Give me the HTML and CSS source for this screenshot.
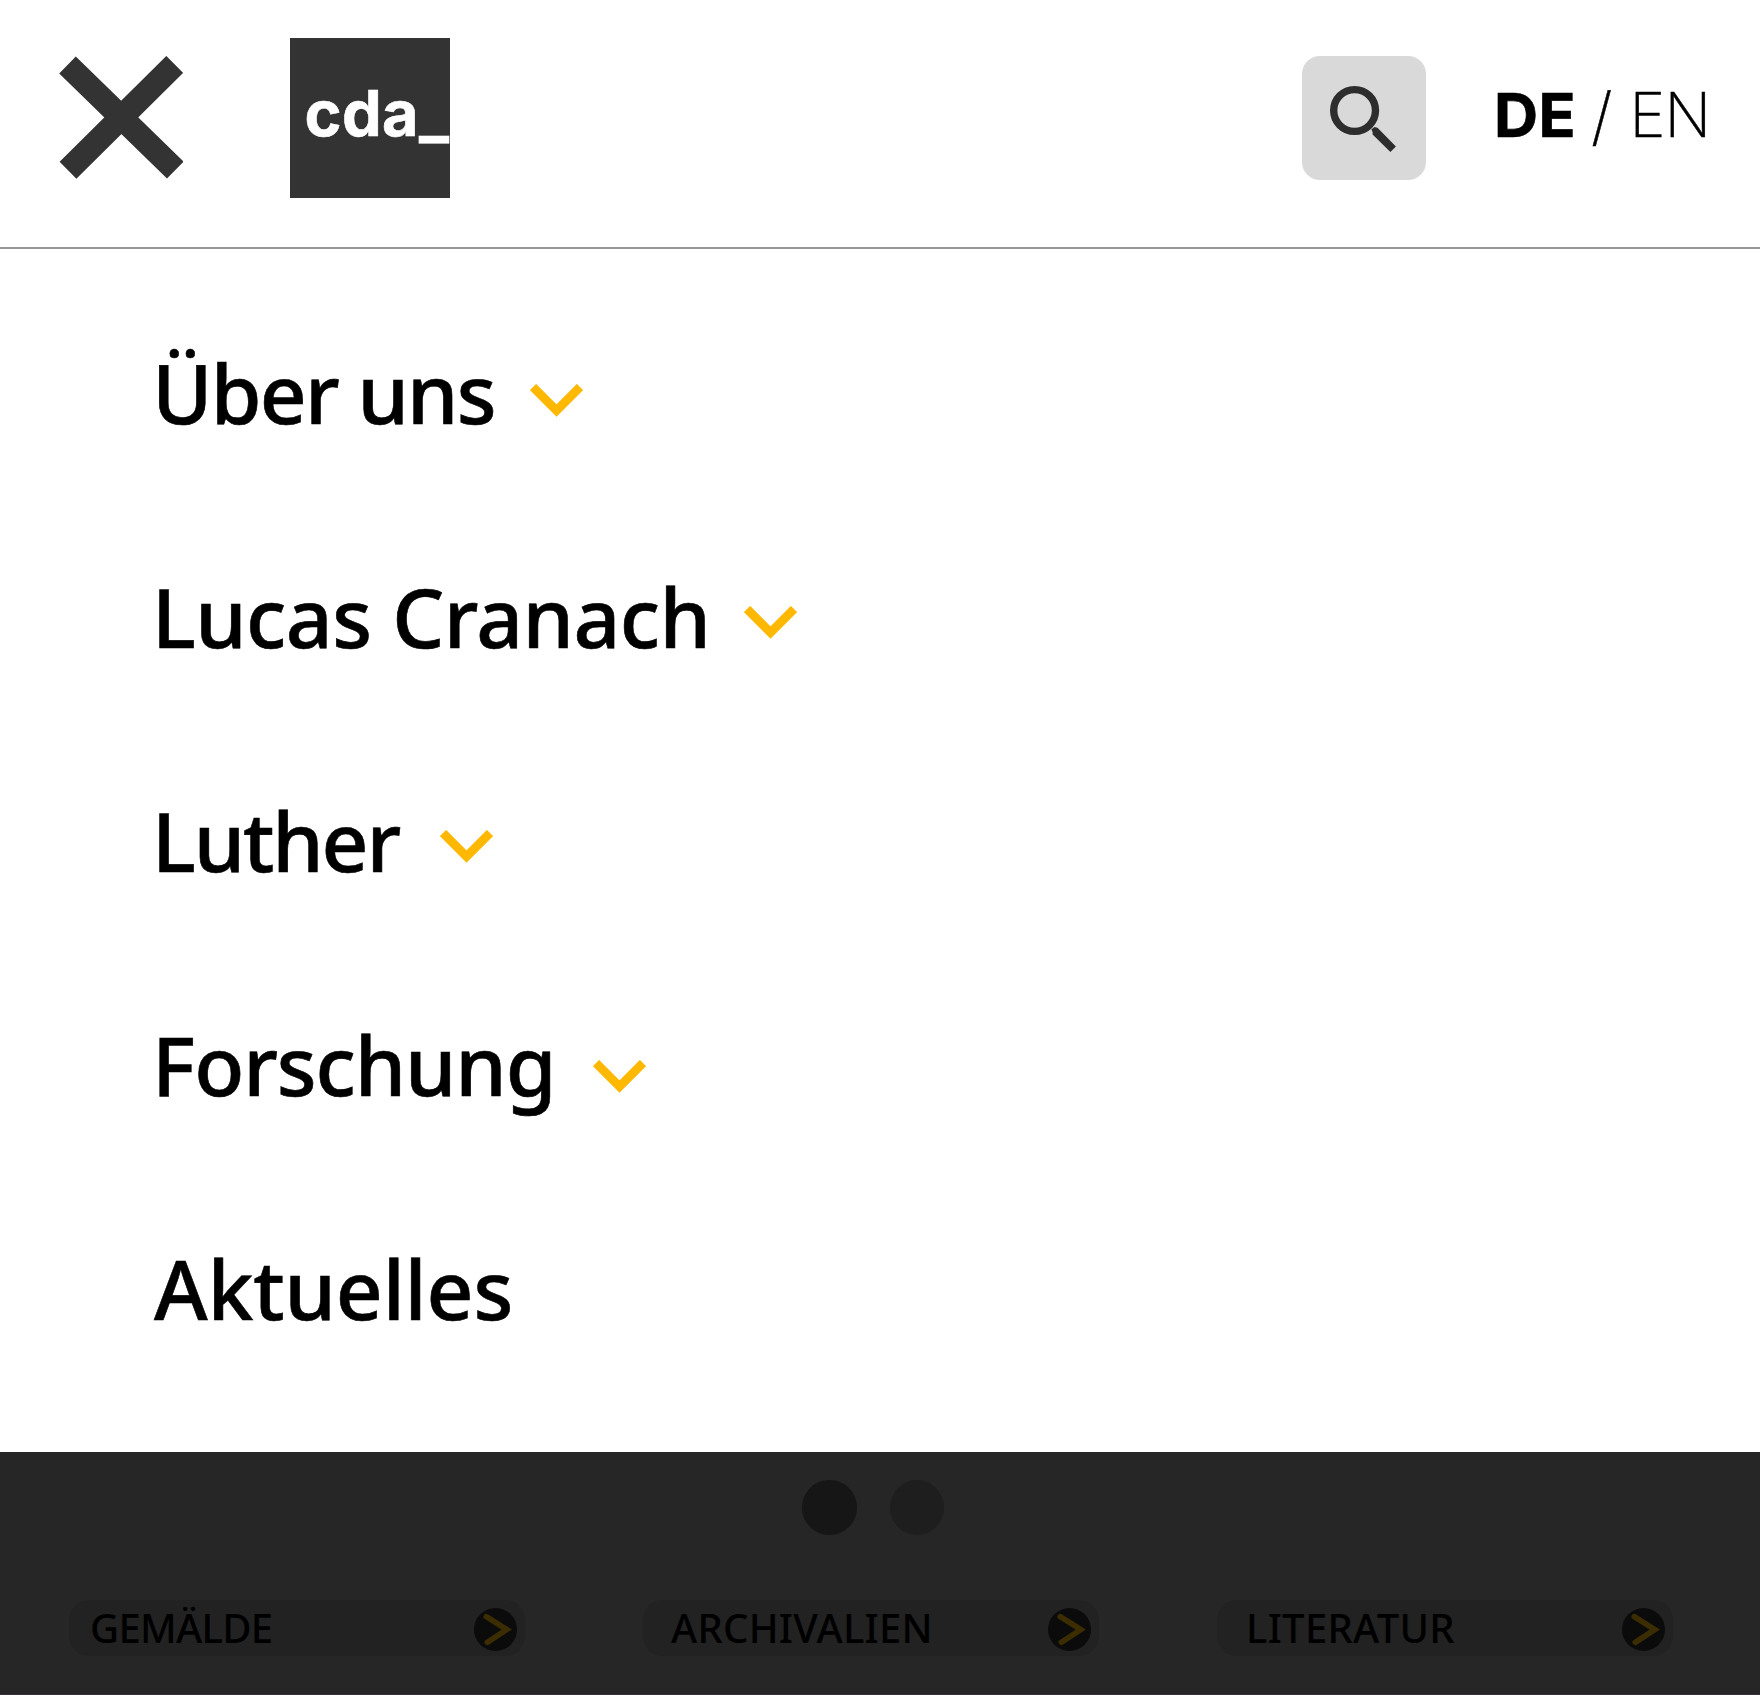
FILE: index.html
```html
<!DOCTYPE html>
<html lang="de">
<head>
<meta charset="utf-8">
<title>cda_</title>
<link rel="stylesheet" href="styles.css">
</head>
<body>
<header class="header">
  <button class="close" aria-label="Menü schließen">
    <svg width="124" height="124" viewBox="0 0 124 124"><path d="M8.5 9.1 116.3 114.1M115.7 8.4 9 114.3" fill="none" stroke="#333" stroke-width="23.8"/></svg>
  </button>
  <a class="logo"><span class="logo-text">cda_</span></a>
  <button class="search" aria-label="Suche">
    <svg width="124" height="124" viewBox="0 0 124 124"><circle cx="52.6" cy="54.5" r="20.9" fill="none" stroke="#2d2d2d" stroke-width="7.4"/><path d="M69.3 73.5 72.5 71l3 .7L93.9 90.4 88.4 96 70.6 78.4V76z" fill="#2d2d2d"/></svg>
  </button>
  <div class="lang"><span class="lang-active">DE</span><span class="lang-sep">/</span><span class="lang-other">EN</span></div>
</header>
<nav class="menu">
  <a class="item item-about"><span>Über uns</span><svg class="chevron" viewBox="0 0 53 33"><path d="M3 3 26.5 26.5 50 3" /></svg></a>
  <a class="item item-cranach"><span>Lucas Cranach</span><svg class="chevron" viewBox="0 0 53 33"><path d="M3 3 26.5 26.5 50 3" /></svg></a>
  <a class="item item-luther"><span>Luther</span><svg class="chevron" viewBox="0 0 53 33"><path d="M3 3 26.5 26.5 50 3" /></svg></a>
  <a class="item item-research"><span>Forschung</span><svg class="chevron" viewBox="0 0 53 33"><path d="M3 3 26.5 26.5 50 3" /></svg></a>
  <a class="item item-news"><span>Aktuelles</span></a>
</nav>
<section class="backdrop">
  <div class="dots"><i class="dot dot-active"></i><i class="dot"></i></div>
  <div class="pills">
    <a class="pill pill-paintings"><span>GEMÄLDE</span><svg class="arrow" viewBox="0 0 42 42"><circle cx="21" cy="21" r="21"/><path d="M12 8.5 32 21 13 33.5"/></svg></a>
    <a class="pill pill-archive"><span>ARCHIVALIEN</span><svg class="arrow" viewBox="0 0 42 42"><circle cx="21" cy="21" r="21"/><path d="M12 8.5 32 21 13 33.5"/></svg></a>
    <a class="pill pill-literature"><span>LITERATUR</span><svg class="arrow" viewBox="0 0 42 42"><circle cx="21" cy="21" r="21"/><path d="M12 8.5 32 21 13 33.5"/></svg></a>
  </div>
</section>
</body>
</html>
```
FILE: styles.css
```css
* { box-sizing: border-box; }
body {
  margin: 0;
  width: 1760px;
  height: 1695px;
  overflow: hidden;
  background: #fff;
  color: #000;
  font-family: "Noto Sans", sans-serif;
}
button { border: 0; padding: 0; background: none; }
svg { display: block; flex: none; }

.header {
  display: flex;
  align-items: flex-start;
  height: 249px;
  padding: 38px 0 0 59px;
  border-bottom: 2px solid #979595;
}
.close { margin-top: 18px; width: 124px; height: 124px; }
.logo {
  margin-left: 107px;
  width: 160px;
  height: 160px;
  padding-left: 14.5px;
  background: #333;
  overflow: hidden;
}
.logo-text {
  display: block;
  font: 700 63px/151px Inter, sans-serif;
  letter-spacing: .4px;
  color: #fff;
  -webkit-text-stroke: .6px #fff;
}
.search {
  margin: 18px 0 0 852px;
  width: 124px;
  height: 124px;
  border-radius: 18px;
  background: #d9d9d9;
}
.lang {
  display: flex;
  align-items: baseline;
  margin-left: 68px;
  padding-top: 26px;
  font-family: Inter, sans-serif;
  font-size: 61px;
  line-height: 100px;
}
.lang-active { font-weight: 700; letter-spacing: .5px; -webkit-text-stroke: .7px #000; }
.lang-sep { margin-left: 15px; font-size: 64px; font-weight: 200; -webkit-text-stroke: .5px #000; transform: translateY(2px); }
.lang-other { margin-left: 17px; font-weight: 200; letter-spacing: -1px; -webkit-text-stroke: .5px #000; }

.menu { height: 1203px; padding: 31px 0 0 152px; }
.item {
  display: flex;
  align-items: center;
  height: 224px;
  font-size: 82px;
  font-weight: 500;
  line-height: 224px;
  white-space: nowrap;
  -webkit-text-stroke: .6px #000;
}
.chevron { width: 53px; height: 33px; fill: none; stroke: #ffb800; stroke-width: 8.8; margin-top: 12px; }
.item-about { letter-spacing: -1.8px; }
.item-about .chevron { margin: 16px 0 0 35.5px; }
.item-cranach { letter-spacing: -.55px; }
.item-cranach .chevron { margin-left: 34px; }
.item-luther { letter-spacing: -2.1px; }
.item-luther .chevron { margin-left: 41.3px; }
.item-research { letter-spacing: -1.1px; }
.item-research .chevron { margin: 24px 0 0 37.2px; }
.item-news { letter-spacing: -.16px; padding-left: 2px; }

.backdrop {
  height: 243px;
  padding-top: 28px;
  background: #262626;
  border-bottom: 1px solid #343234;
}
.dots { display: flex; gap: 33px; padding-left: 802px; }
.dot { width: 54.5px; height: 54.5px; border-radius: 50%; background: #1e1e1e; }
.dot-active { background: #161616; }
.pills {
  display: grid;
  grid-template-columns: repeat(3, 456px);
  gap: 118px;
  padding: 65.5px 0 0 69px;
}
.pill {
  display: flex;
  justify-content: space-between;
  align-items: center;
  height: 56px;
  padding-right: 8px;
  border-radius: 20px;
  background: #222;
  font-size: 40px;
  font-weight: 500;
  line-height: 56px;
}
.pill-paintings { padding-left: 21px; letter-spacing: -.7px; }
.pill-archive { padding-left: 28px; letter-spacing: .25px; }
.pill-literature { padding-left: 29px; letter-spacing: .3px; }
.arrow { width: 43px; height: 43px; margin-top: 2px; fill: #0c0b0b; }
.arrow path { fill: none; stroke: #3b2d00; stroke-width: 5.5; stroke-linecap: round; }
```
